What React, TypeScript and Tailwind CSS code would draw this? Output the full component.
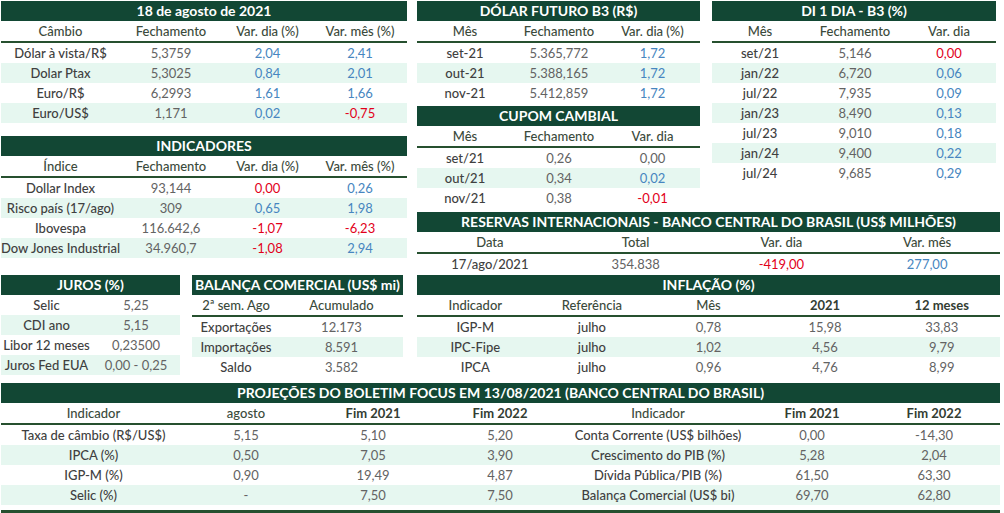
import React from "react";

type Tone = "l" | "n" | "b" | "r";
type Cell = string | [string, Tone];

const toneCls: Record<Tone, string> = {
  l: "text-[#404040] font-medium",
  n: "text-[#636363]",
  b: "text-[#4786c0]",
  r: "text-[#e2001a]",
};

function Title({ children }: { children: React.ReactNode }) {
  return (
    <div className="h-5 bg-[#124734] text-center text-[14px] font-bold leading-5 whitespace-nowrap text-white">
      {children}
    </div>
  );
}

function Table({
  title,
  grid,
  head,
  headBold = [],
  tones,
  rows,
  className = "",
}: {
  title: string;
  grid: string;
  head?: string[];
  headBold?: number[];
  tones: Tone[];
  rows: Cell[][];
  className?: string;
}) {
  return (
    <div className={className}>
      <Title>{title}</Title>
      {head && (
        <div className={`grid ${grid} h-[22px] items-center border-b-2 border-[#26502f]`}>
          {head.map((h, i) => (
            <div
              key={i}
              className={`text-center whitespace-nowrap ${headBold.includes(i) ? "font-bold text-[#333d33]" : "font-medium text-[#3b4a3b]"}`}
            >
              {h}
            </div>
          ))}
        </div>
      )}
      {rows.map((row, r) => (
        <div
          key={r}
          className={`grid ${grid} h-5 items-center ${r % 2 === 1 ? "bg-[#e6f7f0]" : ""}`}
        >
          {row.map((c, i) => {
            let text: string;
            let t: Tone;
            if (Array.isArray(c)) {
              text = c[0];
              t = c[1];
            } else {
              text = c;
              t = tones[i];
              if (t === "b" && text.startsWith("-")) t = "r";
            }
            return (
              <div key={i} className={`text-center whitespace-nowrap ${toneCls[t]}`}>
                {text}
              </div>
            );
          })}
        </div>
      ))}
    </div>
  );
}

export default function App() {
  return (
    <div className="w-[1004px] h-[513px] overflow-hidden bg-white pt-px pl-px font-['Lato','Open_Sans',sans-serif] text-[13px] leading-5">
      <div className="flex items-start">
        {/* left column */}
        <div className="w-[406px]">
          <Table
            title="18 de agosto de 2021"
            grid="grid-cols-[119px_102px_91px_1fr]"
            head={["Câmbio", "Fechamento", "Var. dia (%)", "Var. mês (%)"]}
            tones={["l", "n", "b", "b"]}
            rows={[
              ["Dólar à vista/R$", "5,3759", "2,04", "2,41"],
              ["Dolar Ptax", "5,3025", "0,84", "2,01"],
              ["Euro/R$", "6,2993", "1,61", "1,66"],
              ["Euro/US$", "1,171", "0,02", "-0,75"],
            ]}
          />
          <Table
            className="mt-[13px]"
            title="INDICADORES"
            grid="grid-cols-[119px_102px_91px_1fr]"
            head={["Índice", "Fechamento", "Var. dia (%)", "Var. mês (%)"]}
            tones={["l", "n", "b", "b"]}
            rows={[
              ["Dollar Index", "93,144", ["0,00", "r"], "0,26"],
              ["Risco país (17/ago)", "309", "0,65", "1,98"],
              ["Ibovespa", "116.642,6", "-1,07", "-6,23"],
              ["Dow Jones Industrial", "34.960,7", "-1,08", "2,94"],
            ]}
          />
          <div className="mt-[17px] flex items-start gap-3">
            <Table
              className="w-[179px]"
              title="JUROS (%)"
              grid="grid-cols-[91px_1fr]"
              tones={["l", "n"]}
              rows={[
                ["Selic", "5,25"],
                ["CDI ano", "5,15"],
                ["Libor 12 meses", "0,23500"],
                ["Juros Fed EUA", "0,00 - 0,25"],
              ]}
            />
            <Table
              className="w-[211px]"
              title="BALANÇA COMERCIAL (US$ mi)"
              grid="grid-cols-[88px_1fr]"
              head={["2ª sem. Ago", "Acumulado"]}
              tones={["l", "n"]}
              rows={[
                ["Exportações", "12.173"],
                ["Importações", "8.591"],
                ["Saldo", "3.582"],
              ]}
            />
          </div>
        </div>

        {/* right area */}
        <div className="ml-[10px] w-[583px]">
          <div className="flex items-start gap-3">
            <div className="w-[283px]">
              <Table
                title="DÓLAR FUTURO B3 (R$)"
                grid="grid-cols-[96px_92px_1fr]"
                head={["Mês", "Fechamento", "Var. dia (%)"]}
                tones={["l", "n", "b"]}
                rows={[
                  ["set-21", "5.365,772", "1,72"],
                  ["out-21", "5.388,165", "1,72"],
                  ["nov-21", "5.412,859", "1,72"],
                ]}
              />
              <Table
                className="mt-[3px]"
                title="CUPOM CAMBIAL"
                grid="grid-cols-[96px_92px_1fr]"
                head={["Mês", "Fechamento", "Var. dia"]}
                tones={["l", "n", "b"]}
                rows={[
                  ["set/21", "0,26", ["0,00", "n"]],
                  ["out/21", "0,34", "0,02"],
                  ["nov/21", "0,38", "-0,01"],
                ]}
              />
            </div>
            <Table
              className="w-[284px]"
              title="DI 1 DIA - B3 (%)"
              grid="grid-cols-[96px_94px_1fr]"
              head={["Mês", "Fechamento", "Var. dia"]}
              tones={["l", "n", "b"]}
              rows={[
                ["set/21", "5,146", ["0,00", "r"]],
                ["jan/22", "6,720", "0,06"],
                ["jul/22", "7,935", "0,09"],
                ["jan/23", "8,490", "0,13"],
                ["jul/23", "9,010", "0,18"],
                ["jan/24", "9,400", "0,22"],
                ["jul/24", "9,685", "0,29"],
              ]}
            />
          </div>
          <Table
            className="mt-1"
            title="RESERVAS INTERNACIONAIS - BANCO CENTRAL DO BRASIL (US$ MILHÕES)"
            grid="grid-cols-4"
            head={["Data", "Total", "Var. dia", "Var. mês"]}
            tones={["l", "n", "b", "b"]}
            rows={[["17/ago/2021", "354.838", "-419,00", "277,00"]]}
          />
          <Table
            className="mt-px"
            title="INFLAÇÃO (%)"
            grid="grid-cols-5"
            head={["Indicador", "Referência", "Mês", "2021", "12 meses"]}
            headBold={[3, 4]}
            tones={["l", "l", "n", "n", "n"]}
            rows={[
              ["IGP-M", "julho", "0,78", "15,98", "33,83"],
              ["IPC-Fipe", "julho", "1,02", "4,56", "9,79"],
              ["IPCA", "julho", "0,96", "4,76", "8,99"],
            ]}
          />
        </div>
      </div>

      <Table
        className="mt-[6px] w-[999px]"
        title="PROJEÇÕES DO BOLETIM FOCUS EM 13/08/2021 (BANCO CENTRAL DO BRASIL)"
        grid="grid-cols-[185px_120px_134px_120px_196px_112px_1fr]"
        head={["Indicador", "agosto", "Fim 2021", "Fim 2022", "Indicador", "Fim 2021", "Fim 2022"]}
        headBold={[2, 3, 5, 6]}
        tones={["l", "n", "n", "n", "l", "n", "n"]}
        rows={[
          ["Taxa de câmbio (R$/US$)", "5,15", "5,10", "5,20", "Conta Corrente (US$ bilhões)", "0,00", "-14,30"],
          ["IPCA (%)", "0,50", "7,05", "3,90", "Crescimento do PIB (%)", "5,28", "2,04"],
          ["IGP-M (%)", "0,90", "19,49", "4,87", "Dívida Pública/PIB (%)", "61,50", "63,30"],
          ["Selic (%)", "-", "7,50", "7,50", "Balança Comercial (US$ bi)", "69,70", "62,80"],
        ]}
      />
      <div className="mt-[5px] h-[3px] w-[999px] bg-[#26502f]" />
    </div>
  );
}
